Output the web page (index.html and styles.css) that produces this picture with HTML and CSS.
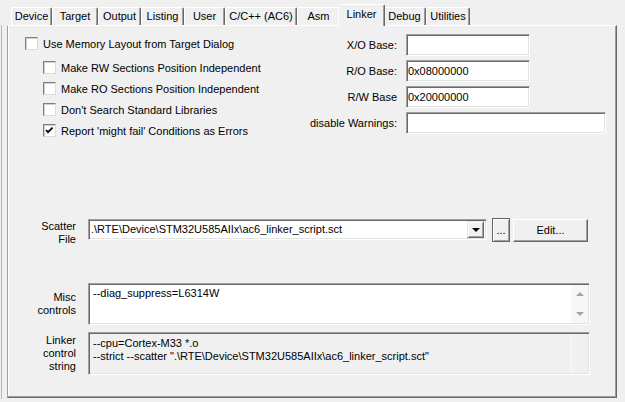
FILE: index.html
```html
<!DOCTYPE html>
<html>
<head>
<meta charset="utf-8">
<link rel="stylesheet" href="styles.css">
</head>
<body>
<div class="dialog">
  <div class="tabs">
    <div class="tab t-device">Device</div>
    <div class="tab t-target">Target</div>
    <div class="tab t-output">Output</div>
    <div class="tab t-listing">Listing</div>
    <div class="tab t-user">User</div>
    <div class="tab t-cc">C/C++ (AC6)</div>
    <div class="tab t-asm">Asm</div>
    <div class="tab active t-linker">Linker</div>
    <div class="tab t-debug">Debug</div>
    <div class="tab t-util">Utilities</div>
  </div>
  <div class="frame">
  <div class="panel">
    <div class="top">
      <div class="checks">
        <div class="check first"><span class="box"></span><span>Use Memory Layout from Target Dialog</span></div>
        <div class="sub">
          <div class="check"><span class="box"></span><span>Make RW Sections Position Independent</span></div>
          <div class="check"><span class="box"></span><span>Make RO Sections Position Independent</span></div>
          <div class="check"><span class="box"></span><span>Don't Search Standard Libraries</span></div>
          <div class="check"><span class="box checked"><svg width="11" height="11" viewBox="0 0 11 11"><path d="M2 5 L4 7.2 L8.6 2.6" fill="none" stroke="#000" stroke-width="1.8"/></svg></span><span>Report 'might fail' Conditions as Errors</span></div>
        </div>
      </div>
      <div class="bases">
        <span class="lbl">X/O Base:</span><div class="field short"></div>
        <span class="lbl">R/O Base:</span><div class="field short">0x08000000</div>
        <span class="lbl">R/W Base</span><div class="field short">0x20000000</div>
        <span class="lbl">disable Warnings:</span><div class="field long"></div>
      </div>
    </div>

    <div class="row scatter">
      <div class="rlabel">Scatter<br>File</div>
      <div class="combo">
        <span class="ctext">.\RTE\Device\STM32U585AIIx\ac6_linker_script.sct</span>
        <span class="dd"><span class="tri-down-black"></span></span>
      </div>
      <div class="btn dots">...</div>
      <div class="btn edit">Edit...</div>
    </div>

    <div class="row misc">
      <div class="rlabel">Misc<br>controls</div>
      <div class="memo">
        <div class="memotext">--diag_suppress=L6314W</div>
        <div class="vscroll"><span class="tri-up"></span><span class="tri-down"></span></div>
      </div>
    </div>

    <div class="row linker">
      <div class="rlabel">Linker<br>control<br>string</div>
      <div class="memo readonly">
        <div class="memotext">--cpu=Cortex-M33 *.o<br>--strict --scatter ".\RTE\Device\STM32U585AIIx\ac6_linker_script.sct"</div>
        <div class="vscroll empty"></div>
      </div>
    </div>
  </div>
  </div>
</div>
</body>
</html>
```

FILE: styles.css
```css
html, body {
  margin: 0;
  padding: 0;
  background: #f0f0f0;
}
body {
  font-family: "Liberation Sans", Arial, sans-serif;
  font-size: 11px;
  color: #000;
  width: 625px;
  height: 402px;
  overflow: hidden;
}
.dialog {
  position: relative;
  height: 402px;
}

/* ---------- tabs ---------- */
.tabs {
  position: relative;
  z-index: 1;
  display: flex;
  align-items: flex-end;
  height: 25px;
  padding-left: 11px;
  box-sizing: border-box;
}
.tab {
  box-sizing: border-box;
  height: 18px;
  line-height: 16px;
  text-align: center;
  white-space: nowrap;
  background: #f0f0f0;
  border-top: 1px solid #fff;
  border-left: 1px solid #fff;
  border-right: 1px solid #696969;
  box-shadow: inset -1px 0 0 #a0a0a0;
  border-radius: 2px 2px 0 0;
}
.t-device { width: 41px; }
.t-target { width: 46px; }
.t-output { width: 43px; }
.t-listing { width: 43px; }
.t-user { width: 41px; }
.t-cc { width: 72px; }
.t-asm { width: 43px; }
.t-debug { width: 43px; }
.t-util { width: 44px; }
.tab.active {
  width: 47px;
  height: 22px;
  line-height: 18px;
  margin: 0 -2px -1px -2px;
  position: relative;
  z-index: 2;
}

/* ---------- panel ---------- */
.frame {
  margin-left: 1px;
  padding-left: 5px;
  border-left: 1px solid #b4b4b4;
  height: 374px;
}
.panel {
  box-sizing: border-box;
  width: 610px;
  height: 373px;
  border-top: 1px solid #fff;
  border-left: 1px solid #a0a0a0;
  border-right: 1px solid #696969;
  border-bottom: 1px solid #696969;
  box-shadow: inset -1px -1px 0 #a0a0a0, inset 1px 0 0 #fff;
}

.top {
  display: flex;
  height: 115px;
}
.checks {
  width: 292px;
  padding-top: 7px;
  box-sizing: border-box;
}
.check {
  display: flex;
  align-items: center;
  height: 21px;
  gap: 5px;
  white-space: nowrap;
}
.check.first { padding-left: 17px; }
.sub {
  padding-left: 35px;
  margin-top: 3px;
}
.box {
  box-sizing: border-box;
  width: 13px;
  height: 13px;
  flex: none;
  background: #fff;
  border: 1px solid;
  border-color: #808080 #dcdcdc #dcdcdc #808080;
  box-shadow: inset 1px 1px 0 #d0d0d0;
  display: flex;
  align-items: center;
  justify-content: center;
}
.box svg { display: block; }

.bases {
  display: grid;
  grid-template-columns: 97px auto;
  column-gap: 9px;
  row-gap: 4px;
  padding-top: 8px;
  align-content: start;
  justify-items: start;
}
.lbl {
  justify-self: end;
  align-self: center;
  white-space: nowrap;
}

.field, .combo, .memo {
  box-sizing: border-box;
  background: #fff;
  border: 1px solid;
  border-color: #a0a0a0 #fff #fff #a0a0a0;
  box-shadow: inset 1px 1px 0 #696969, inset -1px -1px 0 #e3e3e3;
}
.field {
  height: 22px;
  line-height: 20px;
  padding-left: 1px;
}
.field.short { width: 124px; }
.field.long { width: 200px; }

/* ---------- lower rows ---------- */
.row {
  display: flex;
  align-items: flex-start;
}
.rlabel {
  width: 68px;
  margin-right: 12px;
  text-align: right;
  line-height: 13px;
  flex: none;
}
.scatter { margin-top: 78px; }
.scatter .rlabel { margin-top: 1px; }
.combo {
  width: 399px;
  height: 21px;
  display: flex;
  align-items: center;
  padding: 2px 2px 2px 2px;
}
.ctext {
  flex: 1;
  white-space: nowrap;
  overflow: hidden;
  line-height: 17px;
}
.dd {
  width: 17px;
  height: 17px;
  box-sizing: border-box;
  background: #f0f0f0;
  border: 1px solid;
  border-color: #e3e3e3 #696969 #696969 #e3e3e3;
  box-shadow: inset 1px 1px 0 #fff, inset -1px -1px 0 #a0a0a0;
  display: flex;
  align-items: center;
  justify-content: center;
}
.tri-down-black {
  width: 0;
  height: 0;
  border-left: 4px solid transparent;
  border-right: 4px solid transparent;
  border-top: 4px solid #000;
}
.btn {
  box-sizing: border-box;
  background: #f0f0f0;
  text-align: center;
  border: 1px solid;
  border-color: #fff #696969 #696969 #fff;
  box-shadow: inset -1px -1px 0 #a0a0a0;
}
.dots {
  width: 18px;
  height: 24px;
  margin-top: -1px;
  margin-left: 5px;
  border-color: #646464;
  box-shadow: inset 1px 1px 0 #fff, inset -1px -1px 0 #a0a0a0;
  line-height: 22px;
}
.edit {
  width: 75px;
  height: 23px;
  margin-left: 3px;
  line-height: 20px;
}

.misc { margin-top: 37px; align-items: center; }
.linker { margin-top: 7px; align-items: center; }
.memo {
  width: 502px;
  display: flex;
  padding: 2px 1px 1px 2px;
}
.misc .memo { height: 42px; }
.linker .memo { height: 43px; }
.memo.readonly { background: #f0f0f0; }
.memotext {
  flex: 1;
  line-height: 13px;
  padding-left: 2px;
  white-space: nowrap;
  overflow: hidden;
}
.misc .memotext { padding-top: 1px; }
.linker .memotext { padding-top: 2px; }
.vscroll {
  width: 17px;
  flex: none;
  margin: -1px 0 0 0;
  background: #f7f7f7;
  display: flex;
  flex-direction: column;
  justify-content: space-between;
  align-items: center;
  padding: 7px 0 7px 0;
  box-sizing: border-box;
}
.vscroll.empty {
  background: transparent;
  border-left: 1px solid #fafafa;
}
.tri-up {
  width: 0;
  height: 0;
  border-left: 4px solid transparent;
  border-right: 4px solid transparent;
  border-bottom: 4px solid #a3a3a3;
}
.tri-down {
  width: 0;
  height: 0;
  border-left: 4px solid transparent;
  border-right: 4px solid transparent;
  border-top: 4px solid #a3a3a3;
}
```
